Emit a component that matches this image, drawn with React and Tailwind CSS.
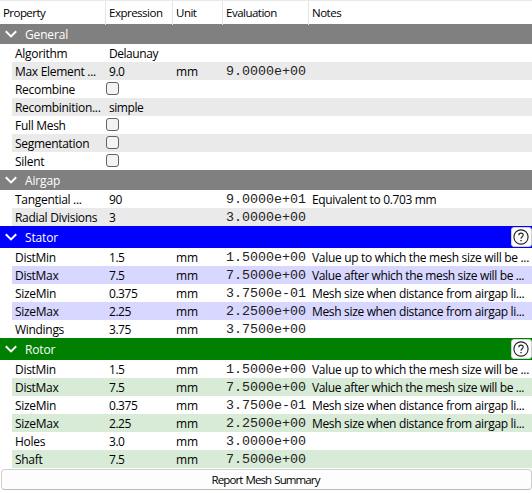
import React from "react";

const VALUE_UP = { text: "Value up to which the mesh size will be ...", spacing: "tracking-[-0.31px]" };
const VALUE_AFTER = { text: "Value after which the mesh size will be ...", spacing: "tracking-[-0.36px]" };
const MESH_SIZE = { text: "Mesh size when distance from airgap li...", spacing: "tracking-[-0.33px]" };
const EQUIVALENT = { text: "Equivalent to 0.703 mm", spacing: "tracking-[-0.36px]" };

const meshRows = [
  ["DistMin", "1.5", "mm", "1.5000e+00", VALUE_UP],
  ["DistMax", "7.5", "mm", "7.5000e+00", VALUE_AFTER],
  ["SizeMin", "0.375", "mm", "3.7500e-01", MESH_SIZE],
  ["SizeMax", "2.25", "mm", "2.2500e+00", MESH_SIZE],
];

const sections = [
  {
    title: "General",
    bar: "h-5 bg-[#808080]",
    stripe: "bg-[#eaeaea]",
    rows: [
      ["Algorithm", "Delaunay"],
      ["Max Element ...", "9.0", "mm", "9.0000e+00"],
      ["Recombine", null],
      ["Recombinition...", "simple"],
      ["Full Mesh", null],
      ["Segmentation", null],
      ["Silent", null],
    ],
  },
  {
    title: "Airgap",
    bar: "h-5 bg-[#808080]",
    stripe: "bg-[#eaeaea]",
    rows: [
      ["Tangential ...", "90", "", "9.0000e+01", EQUIVALENT],
      ["Radial Divisions", "3", "", "3.0000e+00"],
    ],
  },
  {
    title: "Stator",
    bar: "h-[22px] bg-[#0000ff]",
    stripe: "bg-[#d7d7ff]",
    help: true,
    rows: [...meshRows, ["Windings", "3.75", "mm", "3.7500e+00"]],
  },
  {
    title: "Rotor",
    bar: "h-[22px] bg-[#008000]",
    stripe: "bg-[#d7ebd7]",
    help: true,
    rows: [
      ...meshRows,
      ["Holes", "3.0", "mm", "3.0000e+00"],
      ["Shaft", "7.5", "mm", "7.5000e+00"],
    ],
  },
];

function HelpButton() {
  return (
    <button className="flex h-5 w-[21px] items-center justify-center rounded-[3px] border border-[#d0d0d0] bg-[#fdfdfd]">
      <svg width="16" height="16" viewBox="0 0 16 16" fill="none" stroke="#222" className="mr-0.5 shrink-0">
        <circle cx="8" cy="8" r="7.1" strokeWidth="1.1" />
        <path d="M5.8 6.2C5.8 4.9 6.7 4.1 8 4.1s2.2.8 2.2 2c0 1.6-2.2 1.8-2.2 3.7" strokeWidth="1.1" />
        <path d="M8 11v1.3" strokeWidth="1.3" />
      </svg>
    </button>
  );
}

function Section({ title, bar, stripe, help, rows }) {
  return (
    <section>
      <div className={`flex items-center text-white ${bar}`}>
        <svg width="12" height="8" viewBox="0 0 12 8" className="mb-px ml-[5px] shrink-0" fill="none" stroke="#fff" strokeWidth="2">
          <path d="M.8 1.2 6 6.4l5.2-5.2" />
        </svg>
        <span className="ml-2 flex-1 pt-px tracking-[-0.15px]">{title}</span>
        {help && <HelpButton />}
      </div>
      {rows.map(([name, value, unit, evaluation, note], i) => (
        <div
          key={name}
          className={`ml-3 grid h-[18px] grid-cols-[94px_66px_50px_86px_1fr] items-center leading-[18px] ${i % 2 ? stripe : ""}`}
        >
          <span className="pt-px pl-[3px] tracking-[-0.3px]">{name}</span>
          {value === null ? (
            <span className="mb-[2px] h-[13px] w-[13px] rounded-[3px] border border-[#626262] bg-[#f3f3f3]" />
          ) : (
            <span className="pt-px pl-[3px] tracking-[-0.45px]">{value}</span>
          )}
          <span className="pt-px pl-1">{unit}</span>
          <span className="pl-1 font-['Liberation_Mono',monospace] text-[13.33px] text-[#222]">{evaluation}</span>
          <span className={`pt-px pl-1 ${note ? note.spacing : ""}`}>{note?.text}</span>
        </div>
      ))}
    </section>
  );
}

export default function App() {
  return (
    <main className="h-[493px] w-[532px] overflow-hidden bg-white font-['Open_Sans','Noto_Sans',sans-serif] text-[12px] whitespace-nowrap text-black">
      <header className="grid h-6 grid-cols-[106px_67px_50px_86px_1fr] border-t border-[#e9e9e9] text-[11.5px] leading-[24px] tracking-[-0.5px]">
        <span className="border-r border-[#e5e5e5] pl-[3px] tracking-[-0.55px]">Property</span>
        <span className="border-r border-[#e5e5e5] pl-[3px]">Expression</span>
        <span className="border-r border-[#e5e5e5] pl-[3px]">Unit</span>
        <span className="border-r border-[#e5e5e5] pl-[3px]">Evaluation</span>
        <span className="pl-[3px]">Notes</span>
      </header>
      {sections.map((s) => (
        <Section key={s.title} {...s} />
      ))}
      <button className="mt-px ml-px flex h-[21px] w-[531px] items-center justify-center rounded-[4px] border border-[#d0d0d0] border-b-[#bcbcbc] bg-[#fdfdfd] pt-px pr-0.5 text-[11.5px] tracking-[-0.9px] [word-spacing:1px]">
        Report Mesh Summary
      </button>
    </main>
  );
}
